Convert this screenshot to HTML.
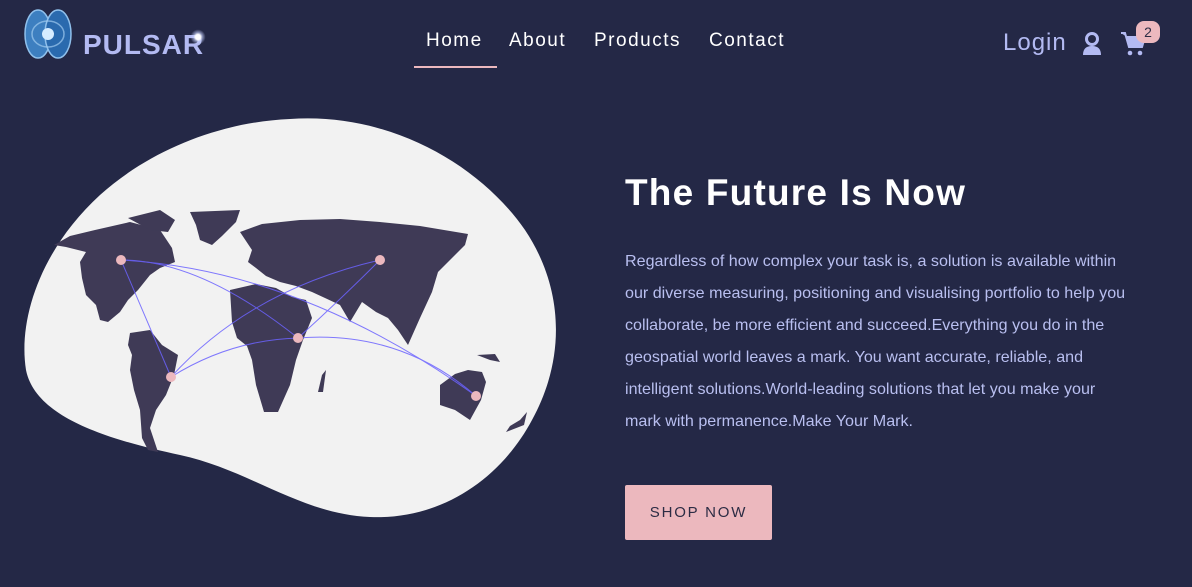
<!DOCTYPE html>
<html><head><meta charset="utf-8"><style>
*{margin:0;padding:0;box-sizing:border-box}
body{width:1192px;height:587px;background:#242846;font-family:"Liberation Sans",sans-serif;position:relative;overflow:hidden;color:#fff}
.abs{position:absolute;white-space:nowrap}
.nav a{position:absolute;top:30px;font-size:19px;letter-spacing:1.5px;color:#fff;text-decoration:none}
h1{position:absolute;left:625px;top:172px;font-size:37px;font-weight:bold;letter-spacing:1.2px;white-space:nowrap}
p{position:absolute;left:625px;top:245px;font-size:16.1px;line-height:32px;color:#b9bff0;white-space:nowrap}
.btn{position:absolute;left:625px;top:485px;width:147px;height:55px;background:#ecb8be;border-radius:2px;color:#2c2c44;font-size:15px;letter-spacing:1.8px;text-align:center;line-height:55px}
</style></head><body>
<svg class="abs" style="left:22px;top:8px" width="56" height="52" viewBox="0 0 56 52">
<ellipse cx="16" cy="26" rx="13" ry="24" fill="#3d7fc0" stroke="#8fc0ec" stroke-width="1.5"/>
<ellipse cx="36" cy="26" rx="13" ry="24" fill="#2a6aae" stroke="#8fc0ec" stroke-width="1.5"/>
<ellipse cx="26" cy="26" rx="16" ry="13" fill="none" stroke="#9fcbf0" stroke-width="1.5" opacity=".7"/>
<circle cx="26" cy="26" r="6" fill="#d6ecff"/>
</svg>
<div class="abs" style="left:83px;top:29px;font-size:28px;font-weight:bold;color:#b3baf2;letter-spacing:1px">PULSAR</div>
<div class="abs" style="left:189px;top:28px;width:18px;height:18px;background:radial-gradient(circle,#fff 0 20%,rgba(200,210,255,.6) 35%,transparent 60%)"></div>
<div class="nav">
<a style="left:426px">Home</a><a style="left:509px">About</a><a style="left:594px">Products</a><a style="left:709px">Contact</a>
</div>
<div class="abs" style="left:414px;top:66px;width:83px;height:2px;background:#ecb8be"></div>
<div class="abs" style="left:1003px;top:29px;font-size:24px;color:#b3baf2;letter-spacing:1px">Login</div>
<svg class="abs" style="left:1080px;top:31px" width="24" height="25" viewBox="0 0 24 25"><circle cx="12" cy="8" r="7" fill="#b3baf2"/><circle cx="12" cy="8" r="4" fill="#242846"/><path d="M3 24 Q3 15 12 15 Q21 15 21 24Z" fill="#b3baf2"/></svg>
<svg class="abs" style="left:1120px;top:31px" width="26" height="26" viewBox="0 0 26 26"><path d="M1 2h4l4 14h13l3-10H7" fill="#b3baf2" stroke="#b3baf2" stroke-width="2"/><circle cx="10" cy="22" r="2.3" fill="#b3baf2"/><circle cx="20" cy="22" r="2.3" fill="#b3baf2"/></svg>
<div class="abs" style="left:1136px;top:21px;width:24px;height:22px;border-radius:8px;background:#ecb8be;color:#2c2c44;font-size:14px;text-align:center;line-height:22px">2</div>
<svg class="abs" style="left:0;top:0" width="600" height="587" viewBox="0 0 600 587">
<path d="M290 119 C390 112 480 165 525 230 C565 290 565 360 532 420 C500 480 440 520 370 517 C300 514 250 470 180 455 C100 438 35 415 26 370 C18 320 40 250 100 195 C150 150 220 122 290 119Z" fill="#f2f2f2"/>
<g fill="#3f3a56">
<path d="M54 245 L70 236 L95 230 L130 222 L160 230 L172 248 L175 262 L160 268 L150 275 L138 290 L128 300 L120 312 L108 322 L100 320 L96 305 L86 295 L82 278 L80 262 L86 252 L66 247Z"/>
<path d="M128 218 L160 210 L175 220 L168 232 L150 230Z"/>
<path d="M190 212 L240 210 L236 222 L222 236 L212 245 L200 240 L196 225Z"/>
<path d="M130 333 L150 330 L162 345 L178 355 L174 375 L166 395 L156 410 L150 428 L158 452 L148 450 L142 438 L140 410 L134 390 L130 370 L132 355 L128 345Z"/>
<path d="M240 232 L262 224 L300 220 L340 219 L380 222 L420 226 L468 234 L465 245 L452 258 L438 272 L432 292 L420 318 L408 345 L398 330 L388 318 L376 312 L362 302 L350 322 L340 305 L325 298 L312 292 L296 286 L280 282 L266 276 L256 268 L248 262 L252 250Z"/>
<path d="M230 290 L256 284 L276 288 L292 297 L306 300 L312 318 L303 340 L296 360 L290 385 L278 412 L264 412 L256 385 L252 360 L247 346 L237 338 L232 322Z"/>
<path d="M440 385 L455 374 L468 370 L482 372 L486 382 L481 400 L470 420 L455 410 L440 405Z"/>
<path d="M477 355 L495 354 L500 362 L490 360Z"/>
<path d="M520 420 L527 412 L524 425 L506 432 L510 426Z"/>
<path d="M322 375 L326 370 L323 392 L318 392Z"/>
</g>
<g fill="none" stroke="#6c63ff" stroke-width="1" opacity=".85">
<path d="M121 260 Q300 270 476 396"/><path d="M121 260 Q200 260 298 338"/><path d="M121 260 L171 377"/>
<path d="M171 377 Q230 340 298 338"/><path d="M171 377 Q250 290 380 260"/><path d="M298 338 Q340 300 380 260"/><path d="M298 338 Q400 330 476 396"/>
</g>
<g fill="#ecb8be"><circle cx="121" cy="260" r="5"/><circle cx="380" cy="260" r="5"/><circle cx="298" cy="338" r="5"/><circle cx="171" cy="377" r="5"/><circle cx="476" cy="396" r="5"/></g>
</svg>
<h1>The Future Is Now</h1>
<p>Regardless of how complex your task is, a solution is available within<br>our diverse measuring, positioning and visualising portfolio to help you<br>collaborate, be more efficient and succeed.Everything you do in the<br>geospatial world leaves a mark. You want accurate, reliable, and<br>intelligent solutions.World-leading solutions that let you make your<br>mark with permanence.Make Your Mark.</p>
<div class="btn">SHOP NOW</div>
</body></html>
